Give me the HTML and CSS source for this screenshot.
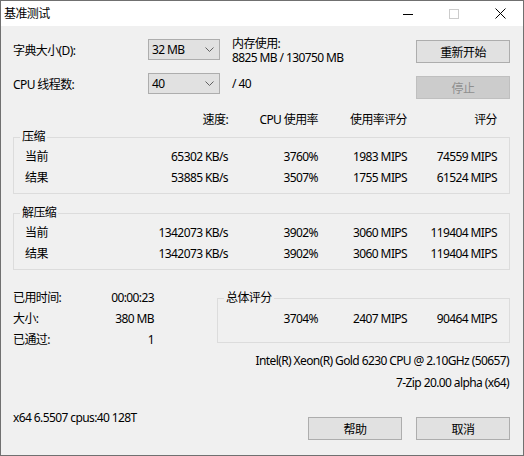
FILE: index.html
```html
<!DOCTYPE html>
<html lang="zh-CN">
<head>
<meta charset="utf-8">
<title>基准测试</title>
<link rel="stylesheet" href="styles.css">
</head>
<body>
<div class="window">
  <div class="titlebar">
    <span class="title">基准测试</span>
    <div class="controls">
      <span class="ctl"><svg width="10" height="10" viewBox="0 0 10 10"><line x1="0" y1="5.5" x2="10" y2="5.5" stroke="#000" stroke-width="1"/></svg></span>
      <span class="ctl"><svg width="10" height="10" viewBox="0 0 10 10"><rect x="0.5" y="0.5" width="9" height="9" fill="none" stroke="#cccccc" stroke-width="1"/></svg></span>
      <span class="ctl"><svg width="11" height="11" viewBox="0 0 11 11"><path d="M0.5 0.5 L10.5 10.5 M10.5 0.5 L0.5 10.5" stroke="#000" stroke-width="1" fill="none"/></svg></span>
    </div>
  </div>
  <div class="content">
    <div class="top">
      <div class="settings">
        <div class="setting">
          <span class="setting-label">字典大小(D):</span>
          <div class="combo"><span>32 MB</span><svg class="chev" width="9" height="5" viewBox="0 0 9 5"><polyline points="0.5,0.5 4.5,4.5 8.5,0.5" fill="none" stroke="#606060" stroke-width="1"/></svg></div>
        </div>
        <div class="setting">
          <span class="setting-label">CPU 线程数:</span>
          <div class="combo"><span>40</span><svg class="chev" width="9" height="5" viewBox="0 0 9 5"><polyline points="0.5,0.5 4.5,4.5 8.5,0.5" fill="none" stroke="#606060" stroke-width="1"/></svg></div>
        </div>
      </div>
      <div class="memory">
        <div class="mem-info">内存使用:<br>8825 MB / 130750 MB</div>
        <div class="threads">/ 40</div>
      </div>
      <div class="actions">
        <button class="btn">重新开始</button>
        <button class="btn" disabled>停止</button>
      </div>
    </div>

    <div class="grid header">
      <span></span><span>速度:</span><span>CPU 使用率</span><span>使用率评分</span><span>评分</span>
    </div>

    <fieldset class="group group-first">
      <legend>压缩</legend>
      <div class="grid rows">
        <span class="l">当前</span><span>65302 KB/s</span><span>3760%</span><span>1983 MIPS</span><span>74559 MIPS</span>
        <span class="l">结果</span><span>53885 KB/s</span><span>3507%</span><span>1755 MIPS</span><span>61524 MIPS</span>
      </div>
    </fieldset>

    <fieldset class="group group-second">
      <legend>解压缩</legend>
      <div class="grid rows">
        <span class="l">当前</span><span>1342073 KB/s</span><span>3902%</span><span>3060 MIPS</span><span>119404 MIPS</span>
        <span class="l">结果</span><span>1342073 KB/s</span><span>3902%</span><span>3060 MIPS</span><span>119404 MIPS</span>
      </div>
    </fieldset>

    <div class="bottom">
      <div class="stats">
        <span class="l">已用时间:</span><span class="v">00:00:23</span>
        <span class="l">大小:</span><span class="v">380 MB</span>
        <span class="l">已通过:</span><span class="v">1</span>
      </div>
      <fieldset class="group total">
        <legend>总体评分</legend>
        <div class="total-row">
          <span>3704%</span><span>2407 MIPS</span><span>90464 MIPS</span>
        </div>
      </fieldset>
    </div>

    <div class="info">
      <div>Intel(R) Xeon(R) Gold 6230 CPU @ 2.10GHz (50657)</div>
      <div>7-Zip 20.00 alpha (x64)</div>
    </div>

    <div class="footer">
      <span class="sys">x64 6.5507 cpus:40 128T</span>
      <div class="footer-buttons">
        <button class="btn">帮助</button>
        <button class="btn">取消</button>
      </div>
    </div>
  </div>
</div>
</body>
</html>
```

FILE: styles.css
```css
* { box-sizing: border-box; }
html, body { margin: 0; padding: 0; background: #f0f0f0; }
body {
  font-family: "Noto Sans", "Noto Sans CJK SC", sans-serif;
  font-size: 12px;
  letter-spacing: -0.6px;
  color: #000;
}
.window {
  width: 524px;
  height: 456px;
  border: 1px solid #707070;
  background: #f0f0f0;
  display: flex;
  flex-direction: column;
  overflow: hidden;
}
.titlebar {
  height: 25px;
  background: #fff;
  display: flex;
  align-items: center;
  flex-shrink: 0;
}
.title { flex: 1; padding-left: 3px; line-height: 16px; }
.controls { display: flex; height: 100%; }
.ctl {
  width: 46px;
  height: 25px;
  display: flex;
  align-items: center;
  justify-content: center;
}
.ctl svg { display: block; }

.content { padding: 0 13px 0 12px; }

.top { display: flex; padding-top: 11px; }
.settings { width: 207px; margin-top: 2px; }
.setting { display: flex; align-items: center; height: 21px; }
.setting + .setting { margin-top: 13px; }
.setting-label { width: 135px; }
.combo {
  width: 72px;
  height: 21px;
  border: 1px solid #adadad;
  background: #e1e1e1;
  display: flex;
  align-items: center;
  justify-content: space-between;
  padding: 0 5px 0 3px;
}
.chev { display: block; }
.memory { margin-left: 12px; }
.mem-info { line-height: 14px; }
.threads { margin-top: 12px; line-height: 14px; }
.actions { margin-left: auto; margin-top: 3px; display: flex; flex-direction: column; }
.btn {
  width: 94px;
  height: 23px;
  border: 1px solid #adadad;
  background: #e1e1e1;
  font: inherit;
  letter-spacing: inherit;
  color: #000;
  padding: 0;
}
.actions .btn + .btn { margin-top: 13px; }
.btn:disabled { background: #cccccc; border-color: #bfbfbf; color: #8f8f8f; }

.grid {
  display: grid;
  grid-template-columns: 100px 115px 90px 89px 90px;
}
.grid span { text-align: right; white-space: nowrap; }
.grid span.l { text-align: left; }
.header { margin-top: 13px; line-height: 16px; }

.group {
  margin: 0;
  padding: 0;
  border: 1px solid #dcdcdc;
  min-width: 0;
}
.group legend {
  margin-left: 6px;
  padding: 0 2px;
  line-height: 16px;
}
.group-first { margin-top: 1px; }
.group-second { margin-top: 11px; }
.rows {
  grid-template-columns: 88px 115px 90px 89px 90px;
  padding: 1px 12px 5px 11px;
  line-height: 21px;
}

.bottom { display: flex; align-items: flex-start; }
.stats {
  width: 141px;
  margin-top: 17px;
  display: grid;
  grid-template-columns: 1fr auto;
  line-height: 21px;
}
.stats .v { text-align: right; }
.total { flex: 1; margin-left: 63px; margin-top: 20px; }
.total-row {
  display: grid;
  grid-template-columns: 1fr 89px 90px;
  padding: 2px 12px 13px 0;
  line-height: 21px;
}
.total-row span { text-align: right; }

.info { text-align: right; line-height: 22px; padding-right: 1px; }

.footer { display: flex; align-items: flex-start; margin-top: 16px; }
.sys { line-height: 16px; }
.footer-buttons { margin-left: auto; margin-top: 7px; display: flex; gap: 14px; }
```
